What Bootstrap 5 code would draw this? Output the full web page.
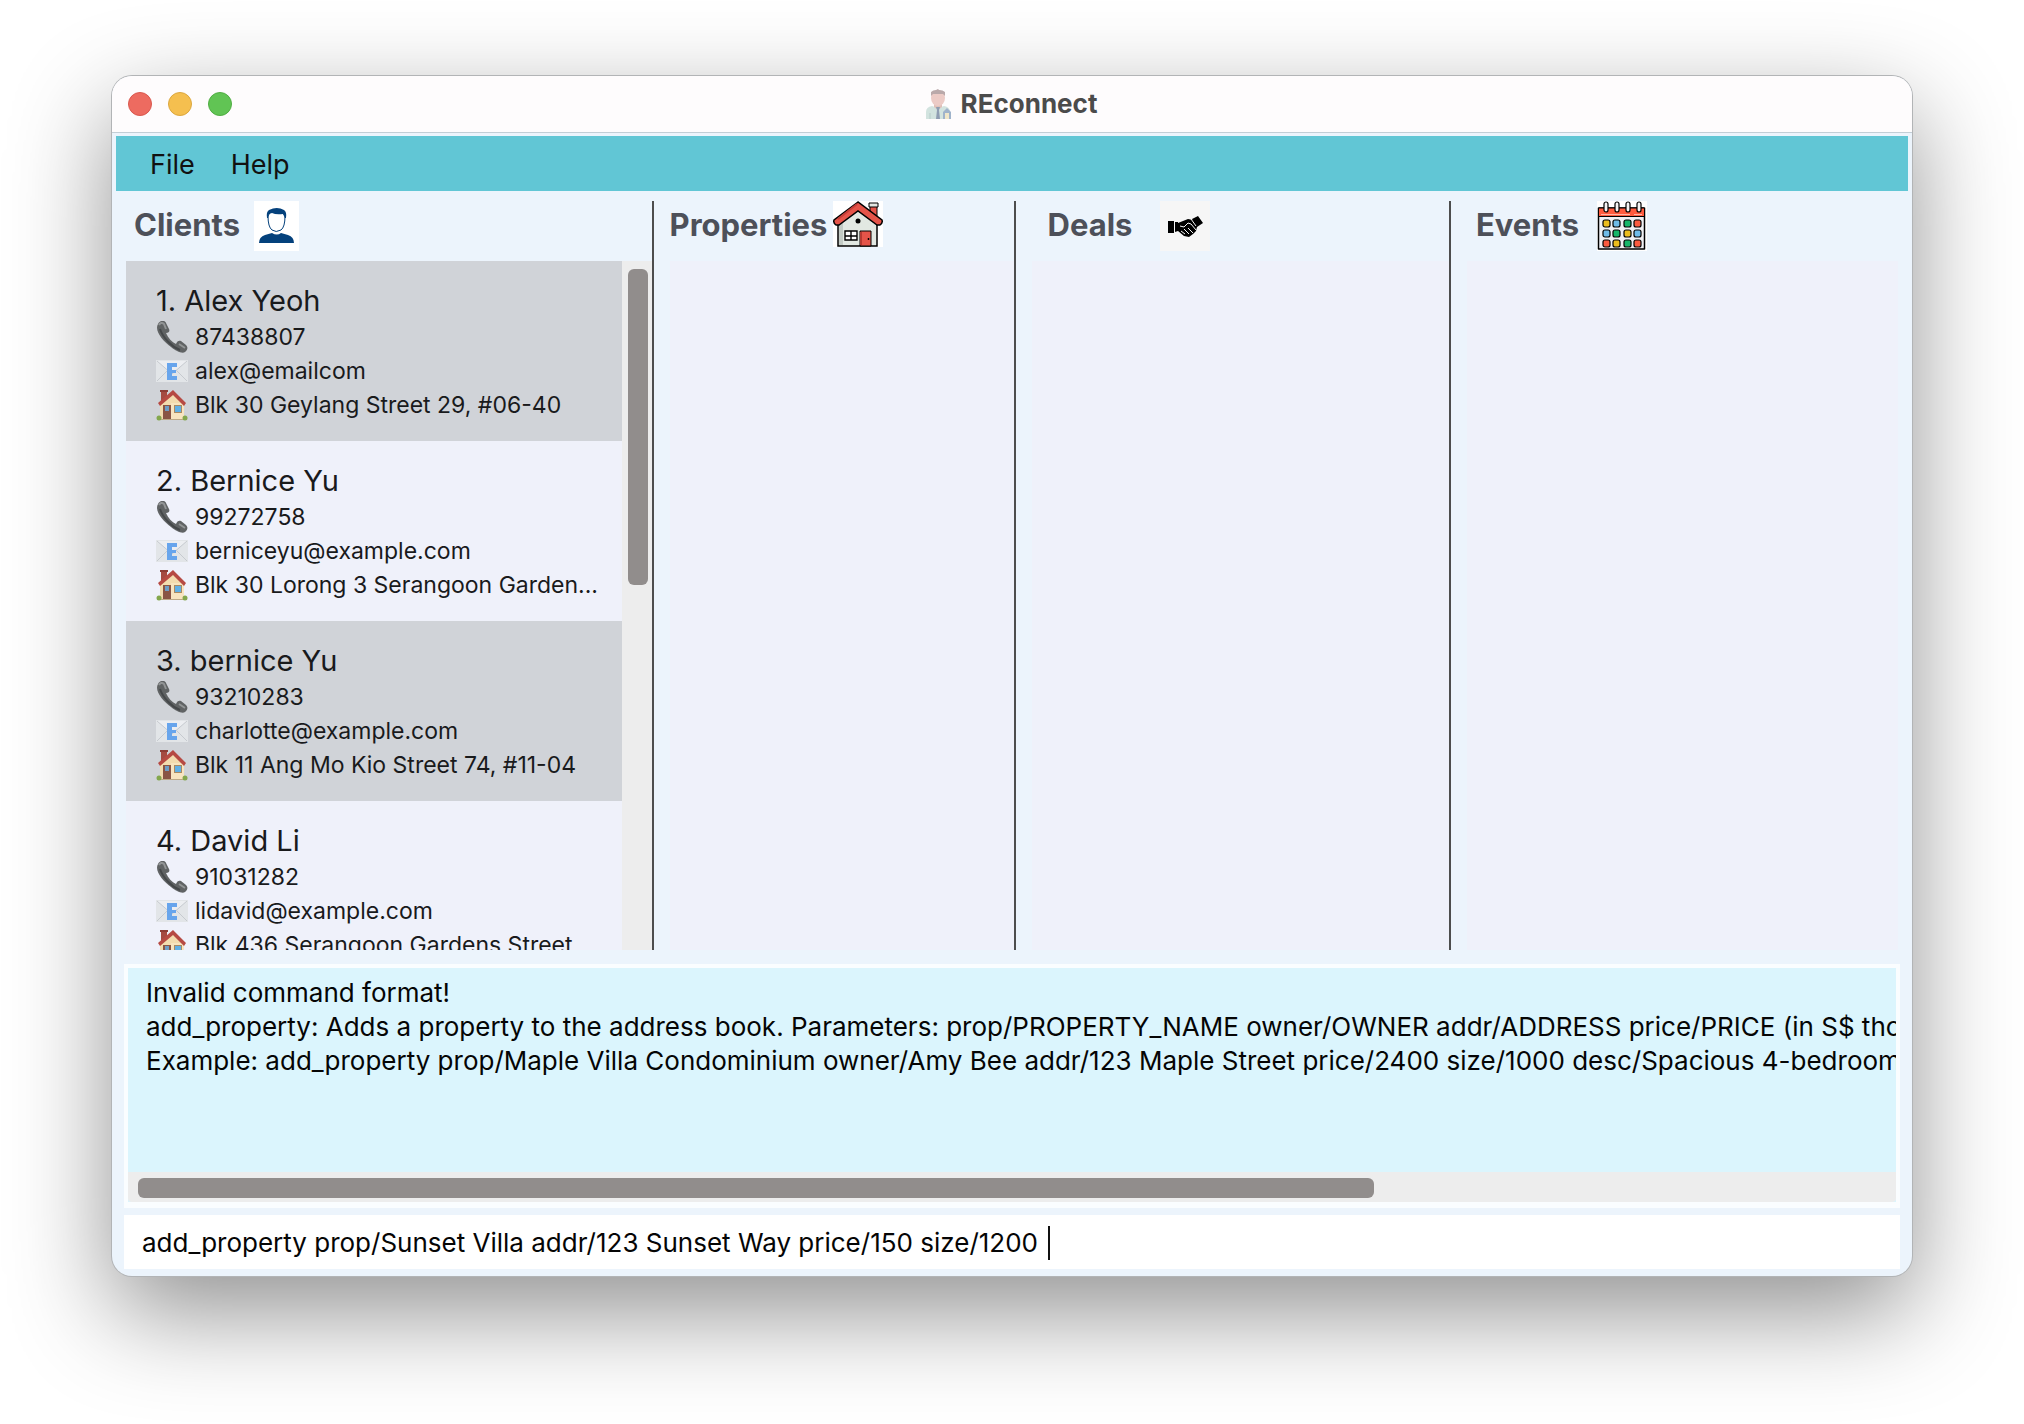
<!DOCTYPE html>
<html lang="en">
<head>
<meta charset="utf-8">
<meta name="viewport" content="width=device-width, initial-scale=1">
<title>REconnect</title>
<link href="https://cdn.jsdelivr.net/npm/bootstrap@5.3.0/dist/css/bootstrap.min.css" rel="stylesheet">
<style>
body { font-family: Inter, "Liberation Sans", sans-serif; background: #fff; color: #191a1c; padding: 76px 112px 148px; }
.app-window { background: #ecf4fc; border-radius: 20px; box-shadow: 0 0 0 1px #b2b4b6, 0 36px 100px rgba(0,0,0,.44); }
.title-bar { height: 57px; background: #fefcfd; border-bottom: 1px solid #c2ced6; padding: 0 16px; }
.title-bar h1 { font-size: 26px; line-height: 32px; font-weight: 700; color: #4b4b4b; }
.light { width: 24px; height: 24px; border-radius: 50%; border: 1px solid; }
.light-close { background: #ed6b60; border-color: #d9584e; }
.light-min { background: #f5bf4f; border-color: #dba73f; }
.light-max { background: #61c454; border-color: #50ad43; }
.lights { gap: 16px; flex: 1 1 0; }
.menu-strip { background: #61c6d5; margin: 3px 4px 0; padding: 2px 20px 0; height: 55px; }
.menu-strip button { font-size: 27px; line-height: 34px; color: #111; padding: 0 14px; border: 0; background: none; }
.menu-strip button + button { margin-left: 8px; }
.panes { padding: 10px 4px 0; }
.pane { border-right: 2px solid #4d4d4d; }
.pane:last-child { border-right: 0; padding-right: 10px; }
.pane-clients { flex: 0 0 30%; padding-left: 10px; }
.pane-properties { flex: 0 0 20.2%; padding-left: 16px; }
.pane-deals { flex: 0 0 24.3%; padding-left: 16px; }
.pane-events { padding-left: 16px; }
.pane header { height: 60px; }
.pane h2 { font-size: 31px; line-height: 48px; font-weight: 700; color: #4d5059; }
.pane-clients header { padding-left: 8px; gap: 14px; }
.pane-properties header { padding-left: 0; gap: 6px; }
.pane-deals header { padding-left: 16px; gap: 28px; }
.pane-events header { padding-left: 9px; gap: 18px; }
.pane-list { background: #eff1fa; }
.client { height: 180px; padding: 21px 20px 0 30px; flex: none; }
.client:nth-child(odd) { background: #d0d3d8; }
.client h3 { font-size: 29px; line-height: 38px; font-weight: 400; }
.client p { font-size: 23px; line-height: 34px; gap: 7px; }
.client svg { width: 32px; height: 32px; flex: none; }
.track { background: #ededed; }
.track-y { width: 30px; padding: 8px 4px 0 6px; }
.track-y .thumb { height: 46.4%; }
.track-x { height: 30px; padding: 6px 10px 4px; border-radius: 0 0 4px 4px; }
.thumb { background: #918d8c; border-radius: 6px; }
.result-box { margin: 14px 12px 0; height: 244px; border: 4px solid #fafdff; border-bottom-width: 6px; background: #dbf5fd; }
.result-box pre { font: inherit; font-size: 26px; line-height: 34px; color: #050505; padding: 8px 0 0 18px; }
.command-box { margin: 7px 12px; height: 54px; background: #fff; padding: 2px 18px 0; }
.command-box input { font-size: 26px; line-height: 34px; width: 906px; color: #050505; border: 0; padding: 0; outline: 0; background: none; }
.caret { width: 2px; height: 34px; background: #111; }
</style>
<script src="https://cdn.jsdelivr.net/npm/bootstrap@5.3.0/dist/js/bootstrap.bundle.min.js"></script>
</head>
<body class="d-flex flex-column vh-100 overflow-hidden">
<svg class="d-none">
  <symbol id="phone" viewBox="0 0 32 32"><path d="M2 3C4-1 9-1 10 2L13 8C14 10 13 12 10 12C12 17 16 21 20 23C21 20 23 19 25 20L30 24C32 26 32 29 29 31C26 33 20 30 15 26C7 20-2 10 2 3Z" fill="#606364"/><path d="M3 4c1-2 3-3 5-1l2 5M23 23l6 4" stroke="#919495" stroke-width="2" fill="none"/><path d="M4 8C7 17 16 26 24 29" stroke="#45484a" stroke-width="2" fill="none"/></symbol>
  <symbol id="mail" viewBox="0 0 32 32"><path d="M0 5h32v22H0z" fill="#e2e5e8"/><path d="M1 6l15 13L31 6z" fill="#eceef1"/><path d="M1 6l15 13L31 6M1 26l11-11M31 26L20 15" fill="none" stroke="#c6cacf" stroke-width="1"/><path d="M11 8h10v4h-5v3h4v3h-4v3h5v4H11z" fill="#68a5ec"/></symbol>
  <symbol id="home" viewBox="0 0 32 32"><path d="M5 2h6v10H5z" fill="#a54a41"/><path d="M4 1h8v2H4z" fill="#8d3c35"/><path d="M4 15L17 4l11 11v15H4z" fill="#f3dcae"/><path d="M15 14h13v16H15z" fill="#f8e5bf"/><path d="M2 14L17 1l13 13-2 3L17 6 4 17z" fill="#b64a43"/><path d="M7 16h8v15H7z" fill="#8a5543"/><path d="M9 17h4v5H9z" fill="#6f9cc4"/><path d="M18 16h8v8h-8z" fill="#a98b62"/><path d="M19 17h6v6h-6z" fill="#62b0e4"/><circle cx="3" cy="29" r="2.500" fill="#83a74c"/><circle cx="29" cy="29" r="2.500" fill="#83a74c"/><path d="M5 30h22v1H5z" fill="#bda985"/></symbol>
</svg>

<main class="app-window d-flex flex-column flex-fill overflow-hidden">
  <div class="title-bar d-flex align-items-center flex-shrink-0">
    <div class="lights d-flex"><span class="light light-close"></span><span class="light light-min"></span><span class="light light-max"></span></div>
    <div class="d-flex align-items-center gap-2 pe-1">
      <svg width="30" height="32" viewBox="0 0 30 32"><path d="M3 31V24q0-5 6-6l6 2 6-2q6 1 6 6v7z" fill="#d2e3df"/><path d="M11 15h8v4l-4 3-4-3z" fill="#dfc0b9"/><ellipse cx="15" cy="10" rx="7" ry="8" fill="#eccbc6"/><path d="M8 8V4q2-2 5-2l2-1 1 1q4 0 6 2v4l-2-2H10z" fill="#baa9aa"/><path d="M13 19h4l-1 3 1 9h-4l1-9z" fill="#8f9db2"/><path d="M20 31v-7l4-4 4 4v7z" fill="#9fb3cb"/><path d="M22 25h4v6h-4z" fill="#efe6c9"/><path d="M7 25v6" stroke="#b7cdca"/></svg>
      <h1 class="m-0">REconnect</h1>
    </div>
    <div class="lights"></div>
  </div>

  <nav class="menu-strip d-flex align-items-center flex-shrink-0">
    <button type="button">File</button><button type="button">Help</button>
  </nav>

  <div class="panes d-flex flex-fill overflow-hidden">
    <section class="pane pane-clients d-flex flex-column">
      <header class="d-flex align-items-start flex-shrink-0"><h2 class="m-0">Clients</h2>
        <svg width="45" height="50" viewBox="0 0 45 50"><path d="M0 0h45v50H0z" fill="#fff"/><path d="M5 42q0-6 6-8l7-2v-3h9v3l7 2q6 2 6 8z" fill="#04417c"/><path d="M18 28h9v4q-4 3-9 0z" fill="#fff"/><path d="M14 15q0 11 4 14 4 3 9 0 4-3 4-14l-3-5H17z" fill="#fff" stroke="#04417c"/><path d="M13 17q-1-6 2-8 8-4 15 0 3 2 2 8h-1l-2-4q-7 1-11-1l-3 1-1 4z" fill="#04417c"/></svg>
      </header>
      <div class="d-flex flex-fill overflow-hidden">
        <div class="pane-list flex-fill d-flex flex-column overflow-hidden">
          <article class="client"><h3 class="m-0">1. Alex Yeoh</h3>
            <p class="m-0 d-flex align-items-center"><svg><use href="#phone"/></svg>87438807</p>
            <p class="m-0 d-flex align-items-center"><svg><use href="#mail"/></svg>alex@emailcom</p>
            <p class="m-0 d-flex align-items-center"><svg><use href="#home"/></svg>Blk 30 Geylang Street 29, #06-40</p></article>
          <article class="client"><h3 class="m-0">2. Bernice Yu</h3>
            <p class="m-0 d-flex align-items-center"><svg><use href="#phone"/></svg>99272758</p>
            <p class="m-0 d-flex align-items-center"><svg><use href="#mail"/></svg>berniceyu@example.com</p>
            <p class="m-0 d-flex align-items-center text-nowrap"><svg><use href="#home"/></svg>Blk 30 Lorong 3 Serangoon Garden...</p></article>
          <article class="client"><h3 class="m-0">3. bernice Yu</h3>
            <p class="m-0 d-flex align-items-center"><svg><use href="#phone"/></svg>93210283</p>
            <p class="m-0 d-flex align-items-center"><svg><use href="#mail"/></svg>charlotte@example.com</p>
            <p class="m-0 d-flex align-items-center"><svg><use href="#home"/></svg>Blk 11 Ang Mo Kio Street 74, #11-04</p></article>
          <article class="client"><h3 class="m-0">4. David Li</h3>
            <p class="m-0 d-flex align-items-center"><svg><use href="#phone"/></svg>91031282</p>
            <p class="m-0 d-flex align-items-center"><svg><use href="#mail"/></svg>lidavid@example.com</p>
            <p class="m-0 d-flex align-items-center"><svg><use href="#home"/></svg>Blk 436 Serangoon Gardens Street</p></article>
        </div>
        <div class="track track-y flex-shrink-0"><div class="thumb"></div></div>
      </div>
    </section>

    <section class="pane pane-properties d-flex flex-column">
      <header class="d-flex align-items-start flex-shrink-0"><h2 class="m-0">Properties</h2>
        <svg width="50" height="46" viewBox="0 0 50 46"><path d="M0 0h50v46H0z" fill="#fff"/><path d="M37 5h7v14l-7-6z" fill="#e55449" stroke="#000"/><path d="M36 2h9v4h-9z" fill="#e2e6e1" stroke="#000"/><path d="M5 21L25 6l19 15v24H5z" fill="#e2e8e2" stroke="#000" stroke-width="1.5"/><path d="M6 22v22h4V20z" fill="#c3cbc5"/><path d="M25 1L1 19q-1 3 2 5h3L25 10l19 14h3q3-2 2-5z" fill="#e55449" stroke="#000" stroke-width="1.5"/><path d="M24 3L5 18" stroke="#c53e38" stroke-width="2"/><circle cx="25" cy="20" r="2.5"/><path d="M12 30h12v9H12zM18 30v9M12 35h12" fill="#fff" stroke="#000" stroke-width="1.4"/><path d="M27 30h11v15H27z" fill="#e55449" stroke="#000"/><path d="M28 31v13" stroke="#b63932" stroke-width="2"/><path d="M35.5 37v2" stroke="#000" stroke-width="1.5"/></svg>
      </header>
      <div class="pane-list flex-fill"></div>
    </section>

    <section class="pane pane-deals d-flex flex-column">
      <header class="d-flex align-items-start flex-shrink-0"><h2 class="m-0">Deals</h2>
        <svg width="50" height="50" viewBox="0 0 50 50"><path d="M0 0h50v50H0z" fill="#f6f6f6"/><path d="M8 20h6v12H8zM15 21l3 0v9l-3 1zM32 18l6-3 5 7-6 4zM18 22l5-2 5-2 5 1 4 7-1 4-3 3-4 3-5-1-6-5z"/><path d="M20 25l4 1 4-4 3 1 5 6M21 30l4 3M24 28l5 5M28 27l5 5M31 18l5 7" fill="none" stroke="#f6f6f6"/></svg>
      </header>
      <div class="pane-list flex-fill"></div>
    </section>

    <section class="pane pane-events d-flex flex-column flex-fill">
      <header class="d-flex align-items-start flex-shrink-0"><h2 class="m-0">Events</h2>
        <svg width="50" height="50" viewBox="0 0 50 50"><path d="M0 0h50v50H0z" fill="#fff"/><path d="M1.500 7h46v41h-46z" fill="#f0f0f3" stroke="#000" stroke-width="1.500" stroke-linejoin="round"/><path d="M2 7h45v8H2z" fill="#ff5b3e"/><path d="M2 7h45M2 15.500h45" stroke="#000" stroke-width="1.200"/><path d="M4 13.500h29M37 13.500h8" stroke="#ffb5a5"/><g fill="#f5f5f5" stroke="#000" stroke-width="1.200"><rect x="7" y="1" width="4" height="10" rx="2"/><rect x="18" y="1" width="4" height="10" rx="2"/><rect x="29" y="1" width="4" height="10" rx="2"/><rect x="40" y="1" width="4" height="10" rx="2"/></g><g stroke="#000" stroke-width="1.200"><g fill="#ecbd1d"><rect x="6" y="19" width="7" height="7" rx="2"/><rect x="27" y="29" width="7" height="7" rx="2"/><rect x="16" y="39" width="7" height="7" rx="2"/></g><g fill="#6fbbe8"><rect x="16" y="19" width="7" height="7" rx="2"/><rect x="6" y="29" width="7" height="7" rx="2"/><rect x="37" y="29" width="7" height="7" rx="2"/></g><g fill="#17b569"><rect x="27" y="19" width="7" height="7" rx="2"/><rect x="16" y="29" width="7" height="7" rx="2"/><rect x="27" y="39" width="7" height="7" rx="2"/></g><g fill="#fb5b3f"><rect x="37" y="19" width="7" height="7" rx="2"/><rect x="6" y="39" width="7" height="7" rx="2"/><rect x="37" y="39" width="7" height="7" rx="2"/></g></g></svg>
      </header>
      <div class="pane-list flex-fill"></div>
    </section>
  </div>

  <div class="result-box d-flex flex-column flex-shrink-0">
    <pre class="m-0 flex-fill overflow-hidden">Invalid command format!
add_property: Adds a property to the address book. Parameters: prop/PROPERTY_NAME owner/OWNER addr/ADDRESS price/PRICE (in S$ tho
Example: add_property prop/Maple Villa Condominium owner/Amy Bee addr/123 Maple Street price/2400 size/1000 desc/Spacious 4-bedroom</pre>
    <div class="track track-x"><div class="thumb h-100" style="width: 70.7%"></div></div>
  </div>
  <form class="command-box d-flex align-items-center flex-shrink-0">
    <input type="text" aria-label="Command" value="add_property prop/Sunset Villa addr/123 Sunset Way price/150 size/1200"><span class="caret"></span>
  </form>
</main>
</body>
</html>
